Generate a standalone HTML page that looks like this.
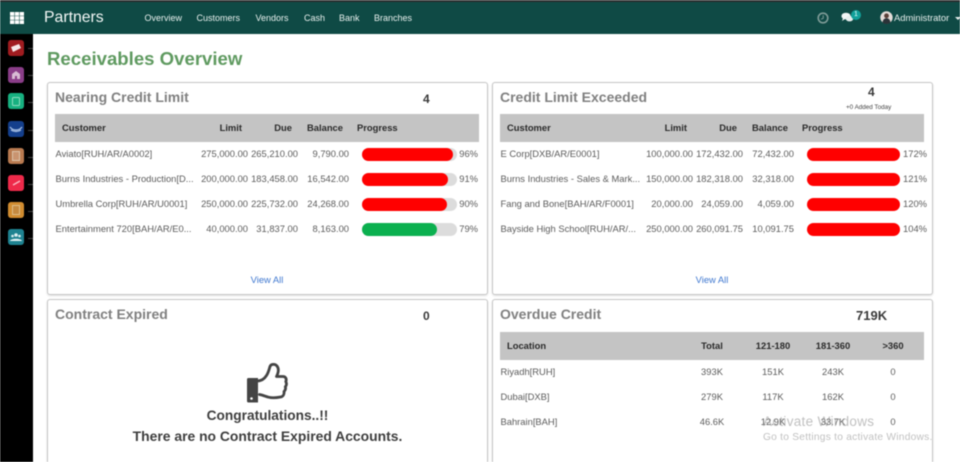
<!DOCTYPE html>
<html><head><meta charset="utf-8"><title>Partners</title>
<style>
html,body{margin:0;padding:0;background:#fff}
body{width:960px;height:462px;position:relative;overflow:hidden;font-family:"Liberation Sans",sans-serif;color:#666}
#w{position:absolute;left:0;top:0;width:960px;height:462px;overflow:hidden;filter:blur(.5px)}
#w div,#w span{position:absolute;white-space:nowrap}
.bar{background:#0f4a45;left:0;top:0;width:960px;height:34px}
.top{background:#2b2f2f;left:0;top:0;width:960px;height:2px}
.nav{top:12px;font-size:9px;line-height:12px;color:#e8f0ee}
.side{background:#000;left:0;top:34px;width:33px;height:428px}
.ic{left:8px;width:16px;height:16px;border-radius:3px}
.da{left:28px;width:5px;height:1px;background:#444}
.card{background:#fff;border:1px solid #c6c6c6;border-radius:3px;box-shadow:0 1px 2px rgba(0,0,0,.12);box-sizing:border-box}
.h{font-size:14px;line-height:18px;font-weight:bold;color:#808080}
.th{background:#c4c4c4;height:28px}
.b{font-size:9.4px;line-height:12px;font-weight:bold;color:#2a2a2a}
.t{font-size:9.4px;line-height:12px;color:#5c5c5c}
.r{text-align:right}
.c{text-align:center}
.tr{background:#dcdcdc;height:13px;width:95px;border-radius:7px}
.fl{height:13px;border-radius:7px;background:#f00}
.n{font-size:12px;line-height:14px;font-weight:bold;color:#3a3a3a}
.va{font-size:9.4px;line-height:12px;color:#3f78d0}
</style></head><body><div id="w">
<div class="bar"></div><div class="top"></div>
<svg style="position:absolute;left:10px;top:12px" width="14" height="12"><g fill="#fff"><rect x="0" y="0" width="4.300" height="3.700"/><rect x="4.850" y="0" width="4.300" height="3.700"/><rect x="9.700" y="0" width="4.300" height="3.700"/><rect x="0" y="4.150" width="4.300" height="3.700"/><rect x="4.850" y="4.150" width="4.300" height="3.700"/><rect x="9.700" y="4.150" width="4.300" height="3.700"/><rect x="0" y="8.300" width="4.300" height="3.700"/><rect x="4.850" y="8.300" width="4.300" height="3.700"/><rect x="9.700" y="8.300" width="4.300" height="3.700"/></g></svg>
<div style="left:44px;top:8px;font-size:15.8px;line-height:20px;color:#f4f8f7">Partners</div>
<div class="nav" style="left:144.5px">Overview</div>
<div class="nav" style="left:196.5px">Customers</div>
<div class="nav" style="left:255.5px">Vendors</div>
<div class="nav" style="left:304px">Cash</div>
<div class="nav" style="left:339px">Bank</div>
<div class="nav" style="left:374px">Branches</div>
<svg style="position:absolute;left:817px;top:12px" width="12" height="12" viewBox="0 0 12 12"><circle cx="6" cy="6" r="4.800" fill="none" stroke="#7f9c98" stroke-width="1.600"/><path d="M6.200 3.200V6.300L4 7.200" fill="none" stroke="#7f9c98" stroke-width="1"/></svg>
<svg style="position:absolute;left:841px;top:12px" width="13" height="11" viewBox="0 0 13 11"><ellipse cx="5" cy="4" rx="4.600" ry="3.300" fill="#f2f6f6"/><ellipse cx="8.500" cy="6.600" rx="3.800" ry="2.800" fill="#e6eeee"/><path d="M2 6l-1 3 3-2z" fill="#f2f6f6"/></svg>
<div style="left:851px;top:10px;width:10px;height:10px;border-radius:5px;background:#12a09a;color:#e8ffff;font-size:7px;line-height:10px;text-align:center">1</div>
<svg style="position:absolute;left:880px;top:11px" width="13" height="13" viewBox="0 0 13 13"><circle cx="6.500" cy="6.500" r="6.200" fill="#e4dcd8"/><circle cx="6.500" cy="4.800" r="2.400" fill="#5a4038"/><path d="M2.500 11.500c.5-3 2-4.200 4-4.200s3.500 1.200 4 4.200a6 6 0 0 1-8 0z" fill="#2b3338"/></svg>
<div class="nav" style="left:894px;top:12px;font-size:9.4px">Administrator</div>
<div style="left:955px;top:17px;width:0;height:0;border-left:3px solid transparent;border-right:3px solid transparent;border-top:3px solid #e8f0ee"></div>

<div class="side"></div>
<div class="ic" style="top:40px;background:#a01c20"></div><svg style="position:absolute;left:10px;top:43px" width="12" height="10"><path d="M1 4l8-3 2 4-8 4z" fill="#f4e8e8"/></svg>
<div class="ic" style="top:67px;background:#8a3d88"></div><svg style="position:absolute;left:11px;top:70px" width="10" height="10"><path d="M1 9V4l4-3 4 3v5H6V6H4v3z" fill="#d8bcd4"/></svg>
<div class="ic" style="top:93px;background:#17b080"></div><svg style="position:absolute;left:12px;top:97px" width="8" height="9"><rect x=".5" y=".5" width="7" height="8" rx="1" fill="none" stroke="#8fdcc0"/></svg>
<div class="ic" style="top:121px;background:#143f8c"></div><svg style="position:absolute;left:9px;top:125px" width="14" height="8"><path d="M1 2c3 4 9 4 12 0M2 5c3 2 7 2 10 0" fill="none" stroke="#a8c0e4" stroke-width="1.200"/></svg>
<div class="ic" style="top:148px;background:#b87a50"></div><svg style="position:absolute;left:12px;top:151px" width="8" height="10"><rect x=".5" y=".5" width="7" height="9" fill="#c99470" stroke="#dcc4aa"/></svg>
<div class="ic" style="top:175px;background:#ee2a4a"></div><svg style="position:absolute;left:12px;top:180px" width="9" height="6"><path d="M1 5L8 1" stroke="#fbb8c2" stroke-width="1.400"/></svg>
<div class="ic" style="top:202px;background:#d08c30"></div><svg style="position:absolute;left:12px;top:205px" width="8" height="10"><rect x=".5" y=".5" width="7" height="9" fill="#c48a40" stroke="#dcbc88"/></svg>
<div class="ic" style="top:229px;background:#1e8290"></div><svg style="position:absolute;left:10px;top:233px" width="12" height="8"><circle cx="6" cy="2" r="1.800" fill="#dff0f2"/><circle cx="2.500" cy="3" r="1.300" fill="#dff0f2"/><circle cx="9.500" cy="3" r="1.300" fill="#dff0f2"/><path d="M0 8c.5-3 11.500-3 12 0z" fill="#dff0f2"/></svg>
<div class="da" style="top:48px"></div><div class="da" style="top:75px"></div><div class="da" style="top:102px"></div><div class="da" style="top:130px"></div><div class="da" style="top:157px"></div><div class="da" style="top:184px"></div><div class="da" style="top:211px"></div><div class="da" style="top:238px"></div>

<div style="left:47px;top:48px;font-size:18.600px;line-height:22px;font-weight:bold;color:#5f9a60">Receivables Overview</div>

<!-- Card 1 -->
<div class="card" style="left:47px;top:82px;width:441px;height:213px"></div>
<div class="h" style="left:55px;top:88px">Nearing Credit Limit</div>
<div class="n" style="left:423px;top:92px">4</div>
<div class="th" style="left:55px;top:114px;width:424px"></div>
<div class="b" style="left:62px;top:122px">Customer</div>
<div class="b r" style="left:192px;width:50px;top:122px">Limit</div>
<div class="b r" style="left:242px;width:50px;top:122px">Due</div>
<div class="b r" style="left:293px;width:50px;top:122px">Balance</div>
<div class="b" style="left:357px;top:122px">Progress</div>

<div class="t" style="left:55.500px;top:148px">Aviato[RUH/AR/A0002]</div>
<div class="t r" style="left:188px;width:60px;top:148px">275,000.00</div>
<div class="t r" style="left:238px;width:60px;top:148px">265,210.00</div>
<div class="t r" style="left:289px;width:60px;top:148px">9,790.00</div>
<div class="tr" style="left:362px;top:148px"></div><div class="fl" style="left:362px;top:148px;width:91px"></div>
<div class="t r" style="left:448px;width:30px;top:148px">96%</div>

<div class="t" style="left:55.500px;top:173px">Burns Industries - Production[D...</div>
<div class="t r" style="left:188px;width:60px;top:173px">200,000.00</div>
<div class="t r" style="left:238px;width:60px;top:173px">183,458.00</div>
<div class="t r" style="left:289px;width:60px;top:173px">16,542.00</div>
<div class="tr" style="left:362px;top:173px"></div><div class="fl" style="left:362px;top:173px;width:86px"></div>
<div class="t r" style="left:448px;width:30px;top:173px">91%</div>

<div class="t" style="left:55.500px;top:198px">Umbrella Corp[RUH/AR/U0001]</div>
<div class="t r" style="left:188px;width:60px;top:198px">250,000.00</div>
<div class="t r" style="left:238px;width:60px;top:198px">225,732.00</div>
<div class="t r" style="left:289px;width:60px;top:198px">24,268.00</div>
<div class="tr" style="left:362px;top:198px"></div><div class="fl" style="left:362px;top:198px;width:85px"></div>
<div class="t r" style="left:448px;width:30px;top:198px">90%</div>

<div class="t" style="left:55.500px;top:223px">Entertainment 720[BAH/AR/E0...</div>
<div class="t r" style="left:188px;width:60px;top:223px">40,000.00</div>
<div class="t r" style="left:238px;width:60px;top:223px">31,837.00</div>
<div class="t r" style="left:289px;width:60px;top:223px">8,163.00</div>
<div class="tr" style="left:362px;top:223px"></div><div class="fl" style="left:362px;top:223px;width:75px;background:#0bb04f"></div>
<div class="t r" style="left:448px;width:30px;top:223px">79%</div>
<div class="va c" style="left:237px;width:60px;top:274px">View All</div>

<!-- Card 2 -->
<div class="card" style="left:492px;top:82px;width:441px;height:213px"></div>
<div class="h" style="left:500px;top:88px">Credit Limit Exceeded</div>
<div class="n" style="left:868px;top:85px">4</div>
<div style="left:846px;top:103px;font-size:6.300px;line-height:9px;color:#444">+0 Added Today</div>
<div class="th" style="left:500px;top:114px;width:424px"></div>
<div class="b" style="left:507px;top:122px">Customer</div>
<div class="b r" style="left:637px;width:50px;top:122px">Limit</div>
<div class="b r" style="left:687px;width:50px;top:122px">Due</div>
<div class="b r" style="left:738px;width:50px;top:122px">Balance</div>
<div class="b" style="left:802px;top:122px">Progress</div>

<div class="t" style="left:500.500px;top:148px">E Corp[DXB/AR/E0001]</div>
<div class="t r" style="left:633px;width:60px;top:148px">100,000.00</div>
<div class="t r" style="left:683px;width:60px;top:148px">172,432.00</div>
<div class="t r" style="left:734px;width:60px;top:148px">72,432.00</div>
<div class="fl" style="left:807px;top:148px;width:93px"></div>
<div class="t r" style="left:897px;width:30px;top:148px">172%</div>

<div class="t" style="left:500.500px;top:173px">Burns Industries - Sales &amp; Mark...</div>
<div class="t r" style="left:633px;width:60px;top:173px">150,000.00</div>
<div class="t r" style="left:683px;width:60px;top:173px">182,318.00</div>
<div class="t r" style="left:734px;width:60px;top:173px">32,318.00</div>
<div class="fl" style="left:807px;top:173px;width:93px"></div>
<div class="t r" style="left:897px;width:30px;top:173px">121%</div>

<div class="t" style="left:500.500px;top:198px">Fang and Bone[BAH/AR/F0001]</div>
<div class="t r" style="left:633px;width:60px;top:198px">20,000.00</div>
<div class="t r" style="left:683px;width:60px;top:198px">24,059.00</div>
<div class="t r" style="left:734px;width:60px;top:198px">4,059.00</div>
<div class="fl" style="left:807px;top:198px;width:93px"></div>
<div class="t r" style="left:897px;width:30px;top:198px">120%</div>

<div class="t" style="left:500.500px;top:223px">Bayside High School[RUH/AR/...</div>
<div class="t r" style="left:633px;width:60px;top:223px">250,000.00</div>
<div class="t r" style="left:683px;width:60px;top:223px">260,091.75</div>
<div class="t r" style="left:734px;width:60px;top:223px">10,091.75</div>
<div class="fl" style="left:807px;top:223px;width:93px"></div>
<div class="t r" style="left:897px;width:30px;top:223px">104%</div>
<div class="va c" style="left:682px;width:60px;top:274px">View All</div>

<!-- Card 3 -->
<div class="card" style="left:47px;top:299px;width:441px;height:180px"></div>
<div class="h" style="left:55px;top:305px">Contract Expired</div>
<div class="n" style="left:423px;top:309px">0</div>
<svg style="position:absolute;left:245px;top:360px" width="45" height="46" viewBox="245 360 45 46">
<path d="M248.500 378H258v24.500h-9.500a1.500 1.500 0 0 1-1.500-1.500v-21.500a1.500 1.500 0 0 1 1.500-1.500z" fill="#444"/>
<circle cx="251.500" cy="398.500" r="1.300" fill="#fff"/>
<path d="M257 381c4 0 7-1.500 9.500-5.500 2-3 2.500-6 3.500-9 .8-2.500 5-3 7-.5 2.200 2.800 1.500 6.500-.5 10.500h6.500c3 0 3.800 3 2.800 5 1 2 .7 4-.5 5.200.6 2-.2 3.800-1.300 4.800.4 2.500-.8 5-3.500 5.500-3 .6-8 1.200-12 .2-3-.8-6-2.200-9-2.700" fill="none" stroke="#444" stroke-width="2.800" stroke-linejoin="round" stroke-linecap="round"/>
</svg>
<div class="c" style="left:47px;width:441px;top:408px;font-size:13.700px;line-height:16px;font-weight:bold;color:#3e3e3e">Congratulations..!!</div>
<div class="c" style="left:47px;width:441px;top:428px;font-size:13.900px;line-height:16px;font-weight:bold;color:#3e3e3e">There are no Contract Expired Accounts.</div>

<!-- Card 4 -->
<div class="card" style="left:492px;top:299px;width:441px;height:180px"></div>
<div class="h" style="left:500px;top:305px">Overdue Credit</div>
<div class="n" style="left:856px;top:309px;font-size:13px">719K</div>
<div class="th" style="left:500px;top:332px;width:424px"></div>
<div class="b" style="left:507px;top:340px">Location</div>
<div class="b c" style="left:682px;width:60px;top:340px">Total</div>
<div class="b c" style="left:743px;width:60px;top:340px">121-180</div>
<div class="b c" style="left:803px;width:60px;top:340px">181-360</div>
<div class="b c" style="left:863px;width:60px;top:340px">&gt;360</div>

<div class="t" style="left:500.500px;top:366px">Riyadh[RUH]</div>
<div class="t c" style="left:682px;width:60px;top:366px">393K</div>
<div class="t c" style="left:743px;width:60px;top:366px">151K</div>
<div class="t c" style="left:803px;width:60px;top:366px">243K</div>
<div class="t c" style="left:863px;width:60px;top:366px">0</div>

<div class="t" style="left:500.500px;top:391px">Dubai[DXB]</div>
<div class="t c" style="left:682px;width:60px;top:391px">279K</div>
<div class="t c" style="left:743px;width:60px;top:391px">117K</div>
<div class="t c" style="left:803px;width:60px;top:391px">162K</div>
<div class="t c" style="left:863px;width:60px;top:391px">0</div>

<div class="t" style="left:500.500px;top:416px">Bahrain[BAH]</div>
<div class="t c" style="left:682px;width:60px;top:416px">46.6K</div>
<div class="t c" style="left:743px;width:60px;top:416px">12.9K</div>
<div class="t c" style="left:803px;width:60px;top:416px">33.7K</div>
<div class="t c" style="left:863px;width:60px;top:416px">0</div>

<div style="left:763px;top:414px;font-size:13.500px;line-height:16px;color:rgba(150,150,150,.6);letter-spacing:.3px">Activate Windows</div>
<div style="left:763px;top:432px;font-size:10.200px;line-height:12px;color:rgba(150,150,150,.6);letter-spacing:.25px">Go to Settings to activate Windows.</div>
</div></body></html>
